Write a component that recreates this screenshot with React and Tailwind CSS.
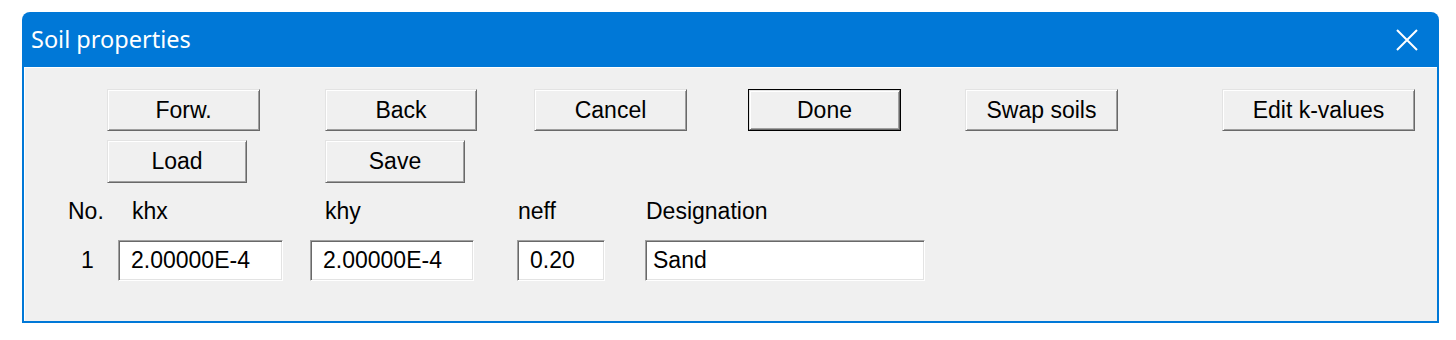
import React from 'react';

const font = { fontFamily: '"Liberation Sans", Arial, sans-serif' };

const Btn = ({ label, className = '', isDefault = false }) => {
  const face = (
    <div className="flex h-full w-full items-center justify-center border border-t-[#e3e3e3] border-l-[#e3e3e3] border-r-[#696969] border-b-[#696969] bg-[#f0f0f0] shadow-[inset_1px_1px_0_#ffffff,inset_-1px_-1px_0_#a0a0a0]">
      <span className="text-[23px] leading-none text-black">{label}</span>
    </div>
  );
  if (isDefault) {
    return <div className={`h-[42px] border border-black ${className}`}>{face}</div>;
  }
  return <div className={`h-[42px] ${className}`}>{face}</div>;
};

const Field = ({ value, className = '', pad = 'pl-[12px]' }) => (
  <div
    className={`flex h-[41px] items-center border border-t-[#a0a0a0] border-l-[#a0a0a0] border-r-white border-b-white bg-white shadow-[inset_1px_1px_0_#696969,inset_-1px_-1px_0_#e3e3e3] ${pad} ${className}`}
  >
    <span className="text-[23px] leading-none text-black">{value}</span>
  </div>
);

export default function App() {
  return (
    <div className="h-[340px] w-[1456px] bg-white pl-[22px] pt-[12px]" style={font}>
      <div className="flex h-[311px] w-[1417px] flex-col rounded-t-[8px] bg-[#0078d7]">
        {/* title bar */}
        <div className="flex h-[55px] items-center justify-between pl-[9px] pr-[21px]">
          <span
            className="text-[23.5px] leading-none text-white"
            style={{ fontFamily: '"Noto Sans", "Open Sans", sans-serif' }}
          >
            Soil properties
          </span>
          <svg width="22" height="22" viewBox="0 0 22 22" className="text-white">
            <path d="M1 1 L21 21 M21 1 L1 21" stroke="currentColor" strokeWidth="2" fill="none" />
          </svg>
        </div>

        {/* client area */}
        <div className="mx-[2px] mb-[2px] flex-1 border-l border-t border-l-white border-t-white bg-[#f0f0f0] pt-[21px]">
          <div className="flex pl-[82px]">
            <Btn label="Forw." className="w-[153px]" />
            <Btn label="Back" className="ml-[65px] w-[152px]" />
            <Btn label="Cancel" className="ml-[57px] w-[153px]" />
            <Btn label="Done" className="ml-[61px] w-[153px]" isDefault />
            <Btn label="Swap soils" className="ml-[64px] w-[153px]" />
            <Btn label="Edit k-values" className="ml-[104px] w-[193px]" />
          </div>

          <div className="mt-[9px] flex pl-[82px]">
            <Btn label="Load" className="h-[43px] w-[140px]" />
            <Btn label="Save" className="ml-[78px] h-[43px] w-[140px]" />
          </div>

          <div className="mt-[16px] flex h-[24px] items-center pl-[43px] text-[23px] leading-none text-black">
            <span className="w-[64px]">No.</span>
            <span className="w-[193px]">khx</span>
            <span className="w-[193px]">khy</span>
            <span className="w-[128px]">neff</span>
            <span>Designation</span>
          </div>

          <div className="mt-[17px] flex items-center pl-[43px]">
            <span className="w-[50px] pl-[13px] text-[23px] leading-none text-black">1</span>
            <Field value="2.00000E-4" className="w-[165px]" />
            <Field value="2.00000E-4" className="ml-[27px] w-[164px]" />
            <Field value="0.20" className="ml-[43px] w-[88px]" />
            <Field value="Sand" className="ml-[40px] w-[280px]" pad="pl-[7px]" />
          </div>
        </div>
      </div>
    </div>
  );
}
